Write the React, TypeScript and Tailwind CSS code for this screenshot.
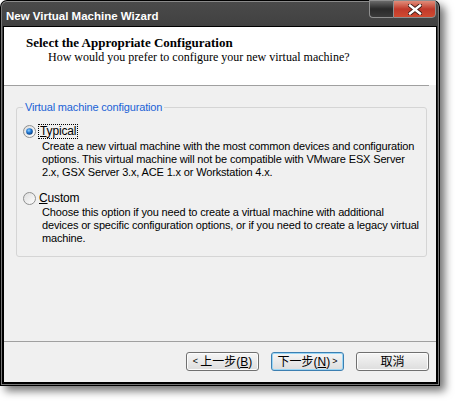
import React from 'react';

function RadioDot({ checked }: { checked: boolean }) {
  return (
    <svg width="13" height="13" viewBox="0 0 13 13" className="shrink-0">
      <defs>
        <linearGradient id={checked ? 'rbg1' : 'rbg0'} x1="0" y1="0" x2="1" y2="1">
          <stop offset="0" stopColor="#dcdcdc" />
          <stop offset="1" stopColor="#ffffff" />
        </linearGradient>
        <radialGradient id="dot" cx="0.4" cy="0.35" r="0.7">
          <stop offset="0" stopColor="#8fd0ff" />
          <stop offset="0.5" stopColor="#1d74d0" />
          <stop offset="1" stopColor="#0b3a78" />
        </radialGradient>
      </defs>
      <circle cx="6.5" cy="6.5" r="6" fill={`url(#${checked ? 'rbg1' : 'rbg0'})`} stroke="#8e8f8f" />
      {checked && <circle cx="6.5" cy="6.5" r="3.3" fill="url(#dot)" />}
    </svg>
  );
}

function WinButton({ children, focused }: { children: React.ReactNode; focused?: boolean }) {
  return (
    <button
      className={`w-[73px] h-[19px] rounded-[3px] border flex items-center justify-center text-[12px] leading-none text-black bg-gradient-to-b from-[#f6f6f6] to-[#dddddd] ${
        focused ? 'border-[#3c7fb1] shadow-[inset_0_0_0_1px_#9ad6f5]' : 'border-[#707070] shadow-[inset_0_0_0_1px_#fcfcfc]'
      }`}
    >
      {children}
    </button>
  );
}

export default function App() {
  return (
    <div className="w-[457px] h-[402px] bg-white font-['Liberation_Sans','Noto_Sans_CJK_TC',sans-serif]">
      <div className="w-[440px] h-[386px] rounded-t-[7px] bg-black p-px shadow-[5px_5px_8px_rgba(0,0,0,0.55)]">
        <div className="h-full rounded-t-[6px] border border-[#777] border-t-[#8a8a8a] flex flex-col bg-gradient-to-b from-[#4a4a4a] via-[#0a0a0a] to-black">
          {/* title bar */}
          <div className="h-[24px] flex items-start shrink-0 relative">
            <span className="pl-[4px] pt-[7px] text-white font-bold text-[11.5px] leading-[14px]">
              New Virtual Machine Wizard
            </span>
            <div className="absolute right-[2px] top-[-2px] flex">
              <div className="w-[24px] h-[18px] rounded-bl-[4px] border border-[#8f8f8f] border-r-0 bg-gradient-to-b from-[#6a6a6a] via-[#2a2a2a] to-[#3a3a3a]" />
              <div className="w-[43px] h-[18px] rounded-br-[4px] border border-[#8f8f8f] bg-gradient-to-b from-[#e08c7a] via-[#c0392b] to-[#d04a30] flex items-center justify-center">
                <svg width="14" height="11" viewBox="0 0 14 11">
                  <path d="M2 1.5 L12 9.5 M12 1.5 L2 9.5" stroke="#3a1a14" strokeWidth="4.2" strokeLinecap="square" />
                  <path d="M2 1.5 L12 9.5 M12 1.5 L2 9.5" stroke="#ffffff" strokeWidth="2.4" strokeLinecap="square" />
                </svg>
              </div>
            </div>
          </div>
          {/* client area */}
          <div className="flex-1 mx-px mb-px border border-black bg-[#f0f0f0] flex flex-col">
            <div className="h-[58px] bg-white shrink-0 font-['Liberation_Serif',serif] text-black">
              <div className="pl-[22px] pt-[8px] font-bold text-[13px] leading-[15px]">
                Select the Appropriate Configuration
              </div>
              <div className="pl-[44px] text-[12px] leading-[15px]">
                How would you prefer to configure your new virtual machine?
              </div>
            </div>
            <div className="h-px bg-[#a0a0a0] mr-[7px] shrink-0" />
            <div className="flex-1 px-[12px] pt-[15px] text-[11px] tracking-[-0.15px] text-black">
              <fieldset className="w-[411px] h-[156px] border border-[#d5d5d5] rounded-[3px] px-0">
                <legend className="ml-[6px] px-[2px] text-[#1a62d6] text-[11px] leading-[13px]">
                  Virtual machine configuration
                </legend>
                <div className="mt-[10px] pl-[6px] flex items-center h-[14px]">
                  <RadioDot checked />
                  <span className="ml-[2px] px-px border border-dotted border-black leading-[13px] text-[12px]">
                    <span className="underline">T</span>ypical
                  </span>
                </div>
                <p className="mt-[2px] pl-[25px] leading-[13px] whitespace-nowrap">
                  Create a new virtual machine with the most common devices and configuration
                  <br />
                  options. This virtual machine will not be compatible with VMware ESX Server
                  <br />
                  2.x, GSX Server 3.x, ACE 1.x or Workstation 4.x.
                </p>
                <div className="mt-[12px] pl-[6px] flex items-center h-[14px]">
                  <RadioDot checked={false} />
                  <span className="ml-[3px] leading-[13px] text-[12px]">
                    <span className="underline">C</span>ustom
                  </span>
                </div>
                <p className="mt-[1px] pl-[25px] leading-[13px] whitespace-nowrap">
                  Choose this option if you need to create a virtual machine with additional
                  <br />
                  devices or specific configuration options, or if you need to create a legacy virtual
                  <br />
                  machine.
                </p>
              </fieldset>
            </div>
            <div className="h-px bg-[#a0a0a0] shrink-0" />
            <div className="h-[40px] shrink-0 flex justify-end gap-[12px] pr-[7px] pt-[10px]">
              <WinButton>
                <span className="text-[9px] mr-[2px]">&lt;</span>上一步(<span className="underline">B</span>)
              </WinButton>
              <WinButton focused>
                下一步(<span className="underline">N</span>)<span className="text-[9px] ml-[2px]">&gt;</span>
              </WinButton>
              <WinButton>取消</WinButton>
            </div>
          </div>
        </div>
      </div>
    </div>
  );
}
